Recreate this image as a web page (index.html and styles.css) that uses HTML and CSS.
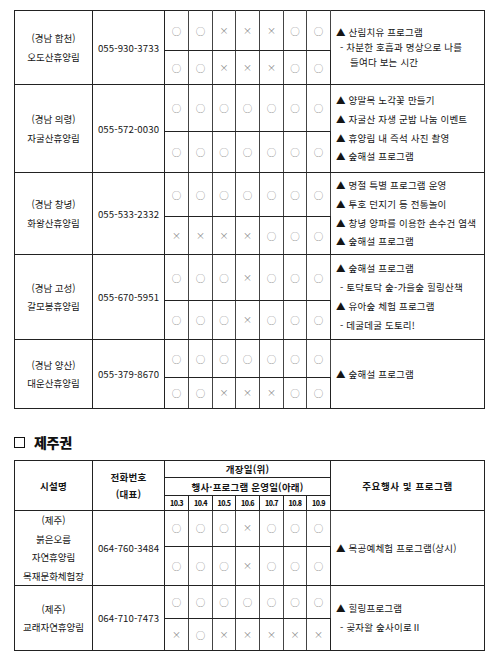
FILE: index.html
```html
<!DOCTYPE html>
<html lang="ko">
<head>
<meta charset="utf-8">
<link rel="stylesheet" href="styles.css">
</head>
<body>
<div class="page">
<table class="grid t1">
<colgroup>
<col class="c-name"><col class="c-phone">
<col class="c-d"><col class="c-d"><col class="c-d2"><col class="c-d"><col class="c-d"><col class="c-d2"><col class="c-d">
<col class="c-prog">
</colgroup>
<tbody>
<tr class="h40">
<td rowspan="2" class="name"><div>(경남 합천)</div><div>오도산휴양림</div></td>
<td rowspan="2" class="phone">055-930-3733</td>
<td class="m o">○</td><td class="m o">○</td><td class="m x">×</td><td class="m x">×</td><td class="m x">×</td><td class="m o">○</td><td class="m o">○</td>
<td rowspan="2" class="prog tight"><div>▲ 산림치유 프로그램</div><div class="dash">- 차분한 호흡과 명상으로 나를</div><div class="cont">들여다 보는 시간</div></td>
</tr>
<tr class="h34 split">
<td class="m o">○</td><td class="m o">○</td><td class="m x">×</td><td class="m x">×</td><td class="m x">×</td><td class="m o">○</td><td class="m o">○</td>
</tr>

<tr class="h47">
<td rowspan="2" class="name"><div>(경남 의령)</div><div>자굴산휴양림</div></td>
<td rowspan="2" class="phone">055-572-0030</td>
<td class="m o">○</td><td class="m o">○</td><td class="m o">○</td><td class="m o">○</td><td class="m o">○</td><td class="m o">○</td><td class="m o">○</td>
<td rowspan="2" class="prog"><div>▲ 양말목 노각꽃 만들기</div><div>▲ 자굴산 자생 군밤 나눔 이벤트</div><div>▲ 휴양림 내 즉석 사진 촬영</div><div>▲ 숲해설 프로그램</div></td>
</tr>
<tr class="h41 split">
<td class="m o">○</td><td class="m o">○</td><td class="m o">○</td><td class="m o">○</td><td class="m o">○</td><td class="m o">○</td><td class="m o">○</td>
</tr>

<tr class="h44">
<td rowspan="2" class="name"><div>(경남 창녕)</div><div>화왕산휴양림</div></td>
<td rowspan="2" class="phone">055-533-2332</td>
<td class="m o">○</td><td class="m o">○</td><td class="m o">○</td><td class="m o">○</td><td class="m o">○</td><td class="m o">○</td><td class="m o">○</td>
<td rowspan="2" class="prog"><div>▲ 명절 특별 프로그램 운영</div><div>▲ 투호 던지기 등 전통놀이</div><div>▲ 창녕 양파를 이용한 손수건 염색</div><div>▲ 숲해설 프로그램</div></td>
</tr>
<tr class="h38 split">
<td class="m x">×</td><td class="m x">×</td><td class="m x">×</td><td class="m x">×</td><td class="m o">○</td><td class="m o">○</td><td class="m o">○</td>
</tr>

<tr class="h46">
<td rowspan="2" class="name"><div>(경남 고성)</div><div>갈모봉휴양림</div></td>
<td rowspan="2" class="phone">055-670-5951</td>
<td class="m o">○</td><td class="m o">○</td><td class="m o">○</td><td class="m x">×</td><td class="m o">○</td><td class="m o">○</td><td class="m o">○</td>
<td rowspan="2" class="prog"><div>▲ 숲해설 프로그램</div><div class="dash">- 토닥토닥 숲-가을숲 힐링산책</div><div>▲ 유아숲 체험 프로그램</div><div class="dash">- 데굴데굴 도토리!</div></td>
</tr>
<tr class="h39 split">
<td class="m o">○</td><td class="m o">○</td><td class="m o">○</td><td class="m x">×</td><td class="m o">○</td><td class="m o">○</td><td class="m o">○</td>
</tr>

<tr class="h38">
<td rowspan="2" class="name"><div>(경남 양산)</div><div>대운산휴양림</div></td>
<td rowspan="2" class="phone">055-379-8670</td>
<td class="m o">○</td><td class="m o">○</td><td class="m o">○</td><td class="m o">○</td><td class="m o">○</td><td class="m o">○</td><td class="m o">○</td>
<td rowspan="2" class="prog"><div>▲ 숲해설 프로그램</div></td>
</tr>
<tr class="h31 split">
<td class="m o">○</td><td class="m o">○</td><td class="m x">×</td><td class="m x">×</td><td class="m x">×</td><td class="m o">○</td><td class="m o">○</td>
</tr>
</tbody>
</table>

<h2 class="region"><span class="box"></span><span>제주권</span></h2>

<table class="grid t2">
<colgroup>
<col class="c-name"><col class="c-phone">
<col class="c-d"><col class="c-d"><col class="c-d2"><col class="c-d"><col class="c-d"><col class="c-d2"><col class="c-d">
<col class="c-prog">
</colgroup>
<thead>
<tr class="h17">
<th rowspan="3">시설명</th>
<th rowspan="3" class="two"><div>전화번호</div><div>(대표)</div></th>
<th colspan="7">개장일(위)</th>
<th rowspan="3" class="wide">주요행사 및 프로그램</th>
</tr>
<tr class="h18">
<th colspan="7">행사·프로그램 운영일(아래)</th>
</tr>
<tr class="h15 dates">
<th>10.3</th><th>10.4</th><th>10.5</th><th>10.6</th><th>10.7</th><th>10.8</th><th>10.9</th>
</tr>
</thead>
<tbody>
<tr class="h33">
<td rowspan="2" class="name"><div>(제주)</div><div>붉은오름</div><div>자연휴양림</div><div>목재문화체험장</div></td>
<td rowspan="2" class="phone">064-760-3484</td>
<td class="m o">○</td><td class="m o">○</td><td class="m o">○</td><td class="m x">×</td><td class="m o">○</td><td class="m o">○</td><td class="m o">○</td>
<td rowspan="2" class="prog"><div>▲ 목공예체험 프로그램(상시)</div></td>
</tr>
<tr class="h36 split">
<td class="m o">○</td><td class="m o">○</td><td class="m o">○</td><td class="m x">×</td><td class="m o">○</td><td class="m o">○</td><td class="m o">○</td>
</tr>
<tr class="h33">
<td rowspan="2" class="name"><div>(제주)</div><div>교래자연휴양림</div></td>
<td rowspan="2" class="phone">064-710-7473</td>
<td class="m o">○</td><td class="m o">○</td><td class="m o">○</td><td class="m o">○</td><td class="m o">○</td><td class="m o">○</td><td class="m o">○</td>
<td rowspan="2" class="prog"><div>▲ 힐링프로그램</div><div class="dash">- 곶자왈 숲사이로Ⅱ</div></td>
</tr>
<tr class="h32 split">
<td class="m x">×</td><td class="m o">○</td><td class="m x">×</td><td class="m x">×</td><td class="m x">×</td><td class="m x">×</td><td class="m x">×</td>
</tr>
</tbody>
</table>
</div>
</body>
</html>
```
FILE: styles.css
```css
html, body {
  margin: 0;
  padding: 0;
  background: #fff;
}
body {
  font-family: "Noto Sans CJK KR", "Noto Sans", sans-serif;
  color: #151515;
  font-size: 9.5px;
}
.page {
  padding: 10px 0 0 14px;
}
.grid {
  border-collapse: collapse;
  table-layout: fixed;
  width: 471px;
  border: 1px solid #111;
}
.c-name { width: 78px; }
.c-phone { width: 72px; }
.c-d { width: 24px; }
.c-d2 { width: 23px; }
.c-prog { width: 154px; }
.grid td, .grid th {
  border: 1px solid #222;
  padding: 0;
  text-align: center;
  vertical-align: middle;
  overflow: hidden;
  white-space: nowrap;
}
.h40 { height: 40px; }
.h34 { height: 34px; }
.h47 { height: 47px; }
.h41 { height: 41px; }
.h44 { height: 44px; }
.h38 { height: 38px; }
.h46 { height: 46px; }
.h39 { height: 39px; }
.h31 { height: 31px; }
.h17 { height: 17px; }
.h18 { height: 18px; }
.h15 { height: 15px; }
.h33 { height: 33px; }
.h36 { height: 36px; }
.h32 { height: 32px; }

.split td.m { border-top: 1px solid #666; }
.grid td.m {
  border-left-color: #444;
  border-right-color: #444;
}
.name {
  line-height: 18.5px;
}
.phone {
  font-size: 9.6px;
  letter-spacing: 0.1px;
}
.m {
  color: #8a8a8a;
  line-height: 10px;
}
.m.o { font-size: 9.5px; }
.m.x { font-size: 9px; }
.grid td.prog {
  text-align: left;
  padding-left: 5px;
  line-height: 18.8px;
  letter-spacing: 0.2px;
}
.grid td.prog.tight { line-height: 15px; }
.prog .dash { padding-left: 4px; }
.prog .cont { padding-left: 14px; }

.region {
  margin: 24px 0 9px 0;
  font-size: 14px;
  font-weight: 900;
  line-height: 18px;
  color: #111;
  display: flex;
  align-items: center;
  gap: 9px;
  letter-spacing: -0.3px;
}
.box {
  width: 9px;
  height: 9px;
  border: 1.5px solid #111;
  display: inline-block;
}
.grid th {
  font-weight: 700;
  letter-spacing: 0.2px;
}
.grid th.two {
  line-height: 17px;
}
.grid th.wide { letter-spacing: 0.6px; }
.dates th {
  font-size: 7px;
  letter-spacing: -0.6px;
  font-weight: 900;
}
```
